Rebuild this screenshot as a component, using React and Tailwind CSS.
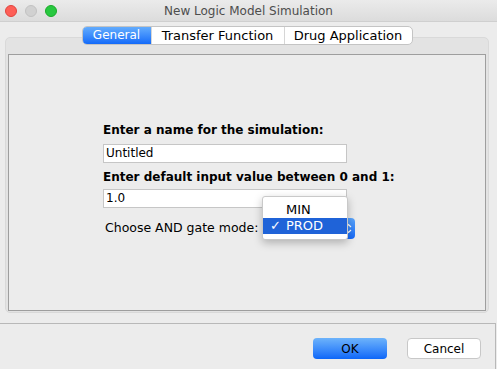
import React from 'react';

function TrafficLights() {
  return (
    <div className="flex items-center gap-[8px] pl-[5px]">
      <span className="w-[12px] h-[12px] rounded-full bg-[#fe5f57] border border-[#e0443e]" />
      <span className="w-[12px] h-[12px] rounded-full bg-[#d1d1d1] border border-[#c2c2c2]" />
      <span className="w-[12px] h-[12px] rounded-full bg-[#28c840] border border-[#1aab29]" />
    </div>
  );
}

function Tabs() {
  return (
    <div className="flex justify-center relative z-10">
      <div className="flex h-[19px] rounded-[5px] border border-[#c4c4c4] bg-white overflow-hidden text-[13px] leading-[17px] text-black">
        <div className="w-[68px] text-center text-[12px] bg-gradient-to-b from-[#63acfd] to-[#136af9] text-white">General</div>
        <div className="w-[133px] text-center border-l border-[#d6d6d6]">Transfer Function</div>
        <div className="w-[128px] text-center border-l border-[#d6d6d6]">Drug Application</div>
      </div>
    </div>
  );
}

function ModeSelect() {
  return (
    <div className="relative">
      <div className="w-[93px] h-[21px] rounded-[4px] bg-gradient-to-b from-[#5aa5fc] to-[#1568f8] flex items-center justify-end pr-[3px]">
        <svg width="7" height="11" viewBox="0 0 7 11" fill="none" stroke="white" strokeWidth="1.2">
          <path d="M1 4 L3.5 1.5 L6 4" />
          <path d="M1 7 L3.5 9.5 L6 7" />
        </svg>
      </div>
      {/* open popup menu */}
      <div className="absolute left-0 top-[-22px] w-[86px] bg-white border border-[#c9c9c9] rounded-[3px] shadow-[0_3px_8px_rgba(0,0,0,0.25)] py-[5px] text-[13px]">
        <div className="h-[16px] leading-[16px] pl-[23px] text-black">MIN</div>
        <div className="h-[16px] leading-[16px] bg-[#1f63d8] text-white flex">
          <span className="w-[23px] pl-[7px]">✓</span>
          <span>PROD</span>
        </div>
      </div>
    </div>
  );
}

export default function App() {
  return (
    <div className="w-[497px] h-[369px] bg-[#ececec] flex flex-col overflow-hidden font-['DejaVu_Sans',sans-serif]">
      {/* title bar */}
      <div className="h-[22px] shrink-0 grid grid-cols-[1fr_auto_1fr] items-center border-b border-[#cfcfcf] bg-gradient-to-b from-[#ebebeb] to-[#dcdcdc]">
        <TrafficLights />
        <div className="text-[12px] text-[#4d4d4d]">New Logic Model Simulation</div>
        <div />
      </div>

      {/* tabbed pane */}
      <div className="pt-[4px] pl-[5px] pr-[8px]">
        <Tabs />
        <div className="-mt-[8px] h-[276px] rounded-[5px] bg-[#e3e3e3] border border-[#d9d9d9] pt-[16px] px-[2px] pb-[1px] flex">
          <div className="flex-1 border border-[#9e9e9e] bg-[#ececec] flex items-center justify-center">
            <div className="flex flex-col w-[288px] pb-[4px] whitespace-nowrap">
              <div className="h-[16px] leading-[16px] text-[12px] font-bold text-black">Enter a name for the simulation:</div>
              <div className="mt-[6px] w-[244px] h-[19px] bg-white border border-[#c6c6c6] text-[12px] leading-[17px] pl-[2px] text-black">Untitled</div>
              <div className="mt-[6px] h-[16px] leading-[16px] text-[12px] font-bold text-black">Enter default input value between 0 and 1:</div>
              <div className="mt-[4px] w-[244px] h-[19px] bg-white border border-[#c6c6c6] text-[12px] leading-[17px] pl-[2px] text-black">1.0</div>
              <div className="mt-[10px] flex items-center pl-[2px]">
                <span className="w-[157px] text-[12.5px] text-black">Choose AND gate mode:</span>
                <ModeSelect />
              </div>
            </div>
          </div>
        </div>
      </div>

      {/* buttons */}
      <div className="mt-[10px] flex-1 w-[496px] border-t border-r border-[#b8b8b8] flex justify-end gap-[20px] pt-[14px] pr-[14px]">
        <button className="w-[74px] h-[21px] rounded-[4px] bg-gradient-to-b from-[#6db3fb] to-[#0c66f8] text-[12px] text-black">OK</button>
        <button className="w-[74px] h-[21px] rounded-[4px] bg-white border border-[#c8c8c8] text-[12px] text-black">Cancel</button>
      </div>
    </div>
  );
}
